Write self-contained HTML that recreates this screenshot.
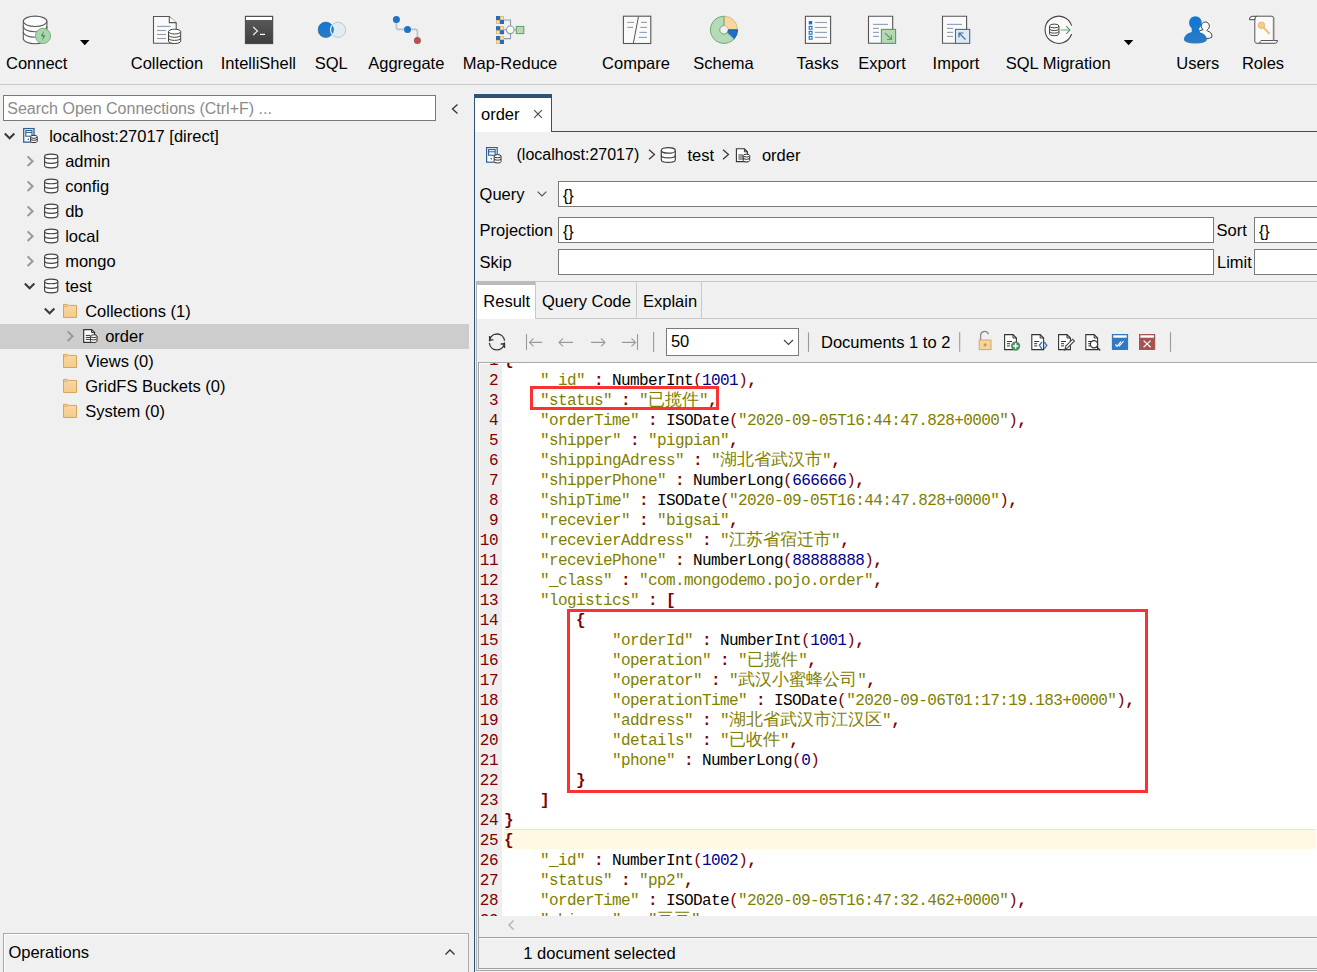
<!DOCTYPE html>
<html><head><meta charset="utf-8"><title>Studio 3T</title>
<style>
html,body{margin:0;padding:0;}
body{width:1317px;height:972px;overflow:hidden;position:relative;background:#f0f0f0;font-family:"Liberation Sans",sans-serif;}
.t{position:absolute;white-space:pre;}
.s{font-family:"Liberation Sans",sans-serif;}
.m{font-family:"Liberation Mono",monospace;}
.r{position:absolute;box-sizing:border-box;}
svg.r{overflow:visible;}
.k{color:#808000}
.p{color:#800000}
.n{color:#000090}
.c{font-size:16.5px;letter-spacing:0}
</style></head><body>

<div class="r" style="left:0px;top:84px;width:1317px;height:1px;background:#cacaca"></div>
<div class="t s" style="left:-63.30px;width:200px;text-align:center;top:53.08px;font-size:16.5px;line-height:20px;color:#000;">Connect</div>
<div class="t s" style="left:67.00px;width:200px;text-align:center;top:53.08px;font-size:16.5px;line-height:20px;color:#000;">Collection</div>
<div class="t s" style="left:158.40px;width:200px;text-align:center;top:53.08px;font-size:16.5px;line-height:20px;color:#000;">IntelliShell</div>
<div class="t s" style="left:231.20px;width:200px;text-align:center;top:53.08px;font-size:16.5px;line-height:20px;color:#000;">SQL</div>
<div class="t s" style="left:306.30px;width:200px;text-align:center;top:53.08px;font-size:16.5px;line-height:20px;color:#000;">Aggregate</div>
<div class="t s" style="left:410.00px;width:200px;text-align:center;top:53.08px;font-size:16.5px;line-height:20px;color:#000;">Map-Reduce</div>
<div class="t s" style="left:536.00px;width:200px;text-align:center;top:53.08px;font-size:16.5px;line-height:20px;color:#000;">Compare</div>
<div class="t s" style="left:623.50px;width:200px;text-align:center;top:53.08px;font-size:16.5px;line-height:20px;color:#000;">Schema</div>
<div class="t s" style="left:717.70px;width:200px;text-align:center;top:53.08px;font-size:16.5px;line-height:20px;color:#000;">Tasks</div>
<div class="t s" style="left:782.00px;width:200px;text-align:center;top:53.08px;font-size:16.5px;line-height:20px;color:#000;">Export</div>
<div class="t s" style="left:856.00px;width:200px;text-align:center;top:53.08px;font-size:16.5px;line-height:20px;color:#000;">Import</div>
<div class="t s" style="left:958.20px;width:200px;text-align:center;top:53.08px;font-size:16.5px;line-height:20px;color:#000;">SQL Migration</div>
<div class="t s" style="left:1097.80px;width:200px;text-align:center;top:53.08px;font-size:16.5px;line-height:20px;color:#000;">Users</div>
<div class="t s" style="left:1163.00px;width:200px;text-align:center;top:53.08px;font-size:16.5px;line-height:20px;color:#000;">Roles</div>
<svg class="r" style="left:0;top:0" width="1317" height="84" viewBox="0 0 1317 84"><g fill="#fdfdfd" stroke="#5a5a5a" stroke-width="1.1"><path d="M23.3 21.3 V38.5 A11.8 5.2 0 0 0 46.9 38.5 V21.3"/><ellipse cx="35.1" cy="21.3" rx="11.8" ry="5.2"/><path d="M23.3 26.5 A11.8 5.2 0 0 0 46.9 26.5" fill="none"/><path d="M23.3 32 A11.8 5.2 0 0 0 46.9 32" fill="none"/></g><circle cx="43" cy="35.9" r="7.6" fill="#a9d6ad" stroke="#78b482" stroke-width="1"/><path d="M44 30.5 L40.8 36.3 H43.2 L42 41.3 L45.3 35.3 H42.9 Z" fill="#3f8a4f"/><path d="M80 40 H89.5 L84.75 45.2 Z" fill="#000"/><path d="M1123.8 40 H1133.3 L1128.55 45.2 Z" fill="#000"/><path d="M153.5 16.5 H169.3 L176.2 23 V43.3 H153.5 Z" fill="#fafafa" stroke="#555" stroke-width="1.1"/><path d="M169.3 16.5 V22.6 H176.2" fill="#fff" stroke="#555" stroke-width="1.1"/><g stroke="#8da0b2" stroke-width="1.1"><path d="M157 26.4 H170.8"/><path d="M157 30.5 H166"/><path d="M157 34.5 H166"/><path d="M157 38.5 H166"/></g><g fill="#fff" stroke="#444" stroke-width="1"><path d="M168.5 31.6 V41.2 A6.1 2.3 0 0 0 180.7 41.2 V31.6"/><ellipse cx="174.6" cy="31.6" rx="6.1" ry="2.4"/><path d="M168.5 35 A6.1 2.3 0 0 0 180.7 35" fill="none"/><path d="M168.5 38.1 A6.1 2.3 0 0 0 180.7 38.1" fill="none"/></g><defs><linearGradient id="gsh" x1="0" y1="0" x2="0" y2="1"><stop offset="0" stop-color="#5c5c5c"/><stop offset="1" stop-color="#3e3e3e"/></linearGradient><linearGradient id="gblue" x1="0" y1="0" x2="0" y2="1"><stop offset="0" stop-color="#0b78d8"/><stop offset="1" stop-color="#2f7ac0"/></linearGradient></defs><rect x="245.3" y="16.2" width="27.5" height="27.5" fill="url(#gsh)" stroke="#3a3a3a" stroke-width="0.8"/><rect x="246" y="17" width="26" height="3" fill="#fff"/><path d="M253.2 27 L257.5 31 L253.2 35" fill="none" stroke="#f0f0f0" stroke-width="1.2"/><path d="M260 34.4 H265" stroke="#fff" stroke-width="1.2"/><circle cx="338.1" cy="29.8" r="7.6" fill="#e2ecf3" stroke="#b9c8d3" stroke-width="1"/><circle cx="325.8" cy="29.8" r="7.7" fill="url(#gblue)" stroke="#2864a0" stroke-width="0.6"/><path d="M332.8 24.4 A7.6 7.6 0 0 0 332.8 35.2" fill="none" stroke="#e2ecf3" stroke-width="1.3"/><path d="M396.4 19.4 V27.4 Q396.4 29.4 398.4 29.4 H415.4 Q417.4 29.4 417.4 31.4 V40.4" fill="none" stroke="#b5c2cc" stroke-width="1.6"/><circle cx="396.4" cy="19.4" r="3.5" fill="#1f72c6"/><circle cx="407.5" cy="29.4" r="3.5" fill="#1f72c6"/><circle cx="417.4" cy="40.4" r="3.5" fill="#b05252"/><path d="M504 20 H510.5 V38.6 H504 M504 29.8 H516" fill="none" stroke="#8f9ba5" stroke-width="1.1"/><rect x="496" y="16" width="8" height="8" fill="#e8b86a"/><rect x="496" y="16" width="4" height="4" fill="#1f6fc0"/><rect x="500" y="20" width="4" height="4" fill="#1f6fc0"/><rect x="500.9" y="16.9" width="2.2" height="2.2" fill="#fbe3b5"/><rect x="496.9" y="20.9" width="2.2" height="2.2" fill="#fbe3b5"/><rect x="496" y="26.2" width="8" height="8" fill="#e8b86a"/><rect x="496" y="26.2" width="4" height="4" fill="#1f6fc0"/><rect x="500" y="30.2" width="4" height="4" fill="#1f6fc0"/><rect x="500.9" y="27.099999999999998" width="2.2" height="2.2" fill="#fbe3b5"/><rect x="496.9" y="31.1" width="2.2" height="2.2" fill="#fbe3b5"/><rect x="496" y="36" width="8" height="8" fill="#e8b86a"/><rect x="496" y="36" width="4" height="4" fill="#1f6fc0"/><rect x="500" y="40" width="4" height="4" fill="#1f6fc0"/><rect x="500.9" y="36.9" width="2.2" height="2.2" fill="#fbe3b5"/><rect x="496.9" y="40.9" width="2.2" height="2.2" fill="#fbe3b5"/><circle cx="510.3" cy="29.8" r="3.8" fill="#fafafa" stroke="#8f9ba5" stroke-width="1.1"/><rect x="516.3" y="26.4" width="7.5" height="7.2" fill="#b5dbb5" stroke="#5f9f6b" stroke-width="1"/><rect x="623.4" y="16.2" width="27.4" height="27.3" fill="#fafafa" stroke="#555" stroke-width="1.1"/><path d="M638.5 16.5 L633.3 43.3" stroke="#555" stroke-width="1"/><g stroke="#8da0b2" stroke-width="1.1"><path d="M627.3 22.4 H634"/><path d="M627.3 27.4 H633"/><path d="M641 22.4 H647"/><path d="M640.3 27.4 H647"/><path d="M639.4 32.4 H647"/><path d="M638.6 37.4 H647"/></g><path d="M724.00 16.20 A13.6 13.6 0 0 1 737.60 29.80 L728.30 29.80 A4.3 4.3 0 0 0 724.00 25.50 Z" fill="#f8d8a0" stroke="#d9b98a" stroke-width="1"/><path d="M737.60 29.80 A13.6 13.6 0 0 1 734.11 38.90 L727.20 32.68 A4.3 4.3 0 0 0 728.30 29.80 Z" fill="#1f6fc4" stroke="#1f5fa4" stroke-width="1"/><path d="M734.11 38.90 A13.6 13.6 0 1 1 724.00 16.20 L724.00 25.50 A4.3 4.3 0 1 0 727.20 32.68 Z" fill="#b4dbb6" stroke="#6aa878" stroke-width="1"/><rect x="805.4" y="16.3" width="25.2" height="27.1" fill="#fafafa" stroke="#555" stroke-width="1.1"/><rect x="808.8" y="21" width="3.4" height="3.4" fill="#1f6fc0"/><rect x="809.2" y="26.4" width="2.8" height="2.8" fill="#fff" stroke="#1f6fc0" stroke-width="1.1"/><rect x="809.2" y="31.4" width="2.8" height="2.8" fill="#fff" stroke="#1f6fc0" stroke-width="1.1"/><rect x="809.2" y="36.4" width="2.8" height="2.8" fill="#fff" stroke="#1f6fc0" stroke-width="1.1"/><g stroke="#8da0b2" stroke-width="1.1"><path d="M815 22.5 H827"/><path d="M815 27.5 H827"/><path d="M815 32.4 H827"/><path d="M815 37.4 H827"/></g><path d="M868.5 16.3 H892.7 V43.3 H868.5 Z" fill="#fafafa" stroke="#555" stroke-width="1.1"/><g stroke="#8da0b2" stroke-width="1.1"><path d="M873 24.4 H888"/><path d="M873 28.4 H879"/><path d="M873 32.4 H879"/><path d="M873 36.4 H879"/></g><rect x="881.4" y="29.4" width="14.2" height="14" fill="#b3d9b3" stroke="#5e9c68" stroke-width="1.1"/><path d="M885 33 L891.5 39.5 M891.5 35 V39.5 H887" fill="none" stroke="#5e9c68" stroke-width="1.1"/><path d="M942.5 16.3 H966.6 V43.3 H942.5 Z" fill="#fafafa" stroke="#555" stroke-width="1.1"/><g stroke="#8da0b2" stroke-width="1.1"><path d="M947 24.4 H962"/><path d="M947 28.4 H953"/><path d="M947 32.4 H953"/><path d="M947 36.4 H953"/></g><rect x="955.5" y="29.4" width="14.2" height="14" fill="#dfe9f2" stroke="#3f6f9f" stroke-width="1.1"/><path d="M965.5 39.5 L959 33 M959 37.5 V33 H963.5" fill="none" stroke="#3f6f9f" stroke-width="1.2"/><path d="M1071.6 25.6 A13.6 13.6 0 1 0 1071.6 34" fill="#fafafa" stroke="#444" stroke-width="1.1"/><g fill="#fff" stroke="#444" stroke-width="1"><path d="M1049.5 26 V33.8 A4.7 1.9 0 0 0 1058.9 33.8 V26"/><ellipse cx="1054.2" cy="26" rx="4.7" ry="1.9"/><path d="M1049.5 28.7 A4.7 1.9 0 0 0 1058.9 28.7" fill="none"/><path d="M1049.5 31.3 A4.7 1.9 0 0 0 1058.9 31.3" fill="none"/></g><path d="M1060.5 30 H1069.5" stroke="#9cc6a4" stroke-width="1.6"/><path d="M1066.3 26.2 L1070 30 L1066.3 33.8" fill="none" stroke="#4f9a63" stroke-width="1.1"/><path d="M1203.2 29.6 A4.1 4.1 0 1 1 1207.4 29.6 Q1206.6 30.6 1207.6 31.2 Q1211.8 32.3 1211.8 35.6 V37.3 Q1210.4 38.6 1205 38.6 H1199 V31 Z" fill="#fafafa" stroke="#444" stroke-width="1"/><path d="M1195.4 16.2 a6.3 6.3 0 0 1 6.3 6.3 c0 2.7 -1.3 4.6 -2.6 5.8 v3.7 q7.7 2.2 7.9 7.8 q-1 3.7 -11.6 3.7 q-10.6 0 -11.6 -3.7 q0.2 -5.6 7.9 -7.8 v-3.7 c-1.3 -1.2 -2.6 -3.1 -2.6 -5.8 a6.3 6.3 0 0 1 6.3 -6.3 z" fill="url(#gblue)"/><path d="M1254.8 17.5 Q1255 16.2 1256.5 16.2 H1272 Q1273.5 16.4 1273.6 18 V40.7" fill="#fafafa" stroke="#555" stroke-width="1"/><rect x="1254.8" y="18" width="18.8" height="24" fill="#fafafa"/><path d="M1254.8 17.5 V41.5 Q1255 43.3 1257 43.3 H1275.5 Q1277.3 43 1277.6 40.5 H1261 Q1260 41 1259.8 43.3" fill="none" stroke="#555" stroke-width="1"/><path d="M1273.6 17.5 V40.5" stroke="#888" stroke-width="1.6"/><path d="M1249.4 19.7 Q1249.5 16.4 1252.2 16.3 H1256.6 Q1254.6 17 1254.8 19.7 Z" fill="#fff" stroke="#444" stroke-width="1"/><circle cx="1261.4" cy="25.3" r="3.3" fill="#f6cf8e" stroke="#e2b068" stroke-width="0.8"/><path d="M1263.2 27.3 L1269 33.2" stroke="#f0c27c" stroke-width="2.2" stroke-linecap="round"/></svg>
<div class="r" style="left:3px;top:95px;width:433px;height:26px;background:#fff;border:1px solid #7a7a7a"></div>
<div class="t s" style="left:7.30px;top:99.46px;font-size:16px;line-height:20px;color:#8b8b8b;">Search Open Connections (Ctrl+F) ...</div>
<svg class="r" style="left:449px;top:102px;" width="12" height="14" viewBox="0 0 12 14"><path d="M8.5 2.5 L3.5 7 L8.5 11.5" fill="none" stroke="#333" stroke-width="1.3"/></svg>
<div class="r" style="left:0px;top:324px;width:469px;height:25px;background:#cdcdcd"></div>
<svg class="r" style="left:4px;top:132px;" width="12" height="9" viewBox="0 0 12 9"><path d="M0.8 1.5 L5.6 6.3 L10.4 1.5" fill="none" stroke="#3a3a3a" stroke-width="2"/></svg>
<svg class="r" style="left:23px;top:124px;" width="16" height="20" viewBox="0 0 16 20"><rect x="0.7" y="4.6" width="10.3" height="13.5" fill="#fff" stroke="#2e6096" stroke-width="1.3"/><rect x="2.8" y="6.6" width="6.2" height="5.6" fill="#fff" stroke="#2e6096" stroke-width="1.1"/><path d="M3 8.6 H9" stroke="#2e6096" stroke-width="1"/><path d="M4.3 15.2 L6 14.2 V16.2 Z" fill="#2e6096"/><g fill="#fff" stroke="#333" stroke-width="1"><path d="M7.6 12.8 V17.3 A3.3 1.3 0 0 0 14.2 17.3 V12.8"/><ellipse cx="10.9" cy="12.8" rx="3.3" ry="1.5"/><path d="M7.6 15 A3.3 1.3 0 0 0 14.2 15" fill="none"/></g></svg>
<div class="t s" style="left:49.20px;top:126.28px;font-size:16.5px;line-height:20px;color:#000;">localhost:27017 [direct]</div>
<svg class="r" style="left:26px;top:155px;" width="9" height="13" viewBox="0 0 9 13"><path d="M1.6 1.4 L6.6 6.2 L1.6 11" fill="none" stroke="#999" stroke-width="2"/></svg>
<svg class="r" style="left:43.6px;top:149px;" width="15" height="20" viewBox="0 0 15 20"><g fill="#fff" stroke="#444" stroke-width="1.15"><path d="M0.6 7.4 V16.6 A6.6 2.3 0 0 0 13.8 16.6 V7.4"/><ellipse cx="7.2" cy="7.4" rx="6.6" ry="2.3"/><path d="M0.6 12 A6.6 2.3 0 0 0 13.8 12" fill="none"/></g></svg>
<div class="t s" style="left:65.20px;top:151.28px;font-size:16.5px;line-height:20px;color:#000;">admin</div>
<svg class="r" style="left:26px;top:180px;" width="9" height="13" viewBox="0 0 9 13"><path d="M1.6 1.4 L6.6 6.2 L1.6 11" fill="none" stroke="#999" stroke-width="2"/></svg>
<svg class="r" style="left:43.6px;top:174px;" width="15" height="20" viewBox="0 0 15 20"><g fill="#fff" stroke="#444" stroke-width="1.15"><path d="M0.6 7.4 V16.6 A6.6 2.3 0 0 0 13.8 16.6 V7.4"/><ellipse cx="7.2" cy="7.4" rx="6.6" ry="2.3"/><path d="M0.6 12 A6.6 2.3 0 0 0 13.8 12" fill="none"/></g></svg>
<div class="t s" style="left:65.20px;top:176.28px;font-size:16.5px;line-height:20px;color:#000;">config</div>
<svg class="r" style="left:26px;top:205px;" width="9" height="13" viewBox="0 0 9 13"><path d="M1.6 1.4 L6.6 6.2 L1.6 11" fill="none" stroke="#999" stroke-width="2"/></svg>
<svg class="r" style="left:43.6px;top:199px;" width="15" height="20" viewBox="0 0 15 20"><g fill="#fff" stroke="#444" stroke-width="1.15"><path d="M0.6 7.4 V16.6 A6.6 2.3 0 0 0 13.8 16.6 V7.4"/><ellipse cx="7.2" cy="7.4" rx="6.6" ry="2.3"/><path d="M0.6 12 A6.6 2.3 0 0 0 13.8 12" fill="none"/></g></svg>
<div class="t s" style="left:65.20px;top:201.28px;font-size:16.5px;line-height:20px;color:#000;">db</div>
<svg class="r" style="left:26px;top:230px;" width="9" height="13" viewBox="0 0 9 13"><path d="M1.6 1.4 L6.6 6.2 L1.6 11" fill="none" stroke="#999" stroke-width="2"/></svg>
<svg class="r" style="left:43.6px;top:224px;" width="15" height="20" viewBox="0 0 15 20"><g fill="#fff" stroke="#444" stroke-width="1.15"><path d="M0.6 7.4 V16.6 A6.6 2.3 0 0 0 13.8 16.6 V7.4"/><ellipse cx="7.2" cy="7.4" rx="6.6" ry="2.3"/><path d="M0.6 12 A6.6 2.3 0 0 0 13.8 12" fill="none"/></g></svg>
<div class="t s" style="left:65.20px;top:226.28px;font-size:16.5px;line-height:20px;color:#000;">local</div>
<svg class="r" style="left:26px;top:255px;" width="9" height="13" viewBox="0 0 9 13"><path d="M1.6 1.4 L6.6 6.2 L1.6 11" fill="none" stroke="#999" stroke-width="2"/></svg>
<svg class="r" style="left:43.6px;top:249px;" width="15" height="20" viewBox="0 0 15 20"><g fill="#fff" stroke="#444" stroke-width="1.15"><path d="M0.6 7.4 V16.6 A6.6 2.3 0 0 0 13.8 16.6 V7.4"/><ellipse cx="7.2" cy="7.4" rx="6.6" ry="2.3"/><path d="M0.6 12 A6.6 2.3 0 0 0 13.8 12" fill="none"/></g></svg>
<div class="t s" style="left:65.20px;top:251.28px;font-size:16.5px;line-height:20px;color:#000;">mongo</div>
<svg class="r" style="left:24px;top:282px;" width="12" height="9" viewBox="0 0 12 9"><path d="M0.8 1.5 L5.6 6.3 L10.4 1.5" fill="none" stroke="#3a3a3a" stroke-width="2"/></svg>
<svg class="r" style="left:43.6px;top:274px;" width="15" height="20" viewBox="0 0 15 20"><g fill="#fff" stroke="#444" stroke-width="1.15"><path d="M0.6 7.4 V16.6 A6.6 2.3 0 0 0 13.8 16.6 V7.4"/><ellipse cx="7.2" cy="7.4" rx="6.6" ry="2.3"/><path d="M0.6 12 A6.6 2.3 0 0 0 13.8 12" fill="none"/></g></svg>
<div class="t s" style="left:65.20px;top:276.28px;font-size:16.5px;line-height:20px;color:#000;">test</div>
<svg class="r" style="left:44px;top:307px;" width="12" height="9" viewBox="0 0 12 9"><path d="M0.8 1.5 L5.6 6.3 L10.4 1.5" fill="none" stroke="#3a3a3a" stroke-width="2"/></svg>
<svg class="r" style="left:63px;top:299px;" width="15" height="20" viewBox="0 0 15 20"><defs><linearGradient id="gf" x1="0" y1="0" x2="0" y2="1"><stop offset="0" stop-color="#fad9a2"/><stop offset="1" stop-color="#f3cb8c"/></linearGradient></defs><path d="M0.5 5.4 H4.6 L5.4 6.4 H13.5 V18.5 H0.5 Z" fill="url(#gf)" stroke="#d8a55c" stroke-width="1"/><path d="M1 7.3 H4.6" stroke="#e0b070" stroke-width="1.2"/></svg>
<div class="t s" style="left:85.20px;top:301.28px;font-size:16.5px;line-height:20px;color:#000;">Collections (1)</div>
<svg class="r" style="left:66px;top:330px;" width="9" height="13" viewBox="0 0 9 13"><path d="M1.6 1.4 L6.6 6.2 L1.6 11" fill="none" stroke="#999" stroke-width="2"/></svg>
<svg class="r" style="left:83px;top:324px;" width="16" height="20" viewBox="0 0 16 20"><path d="M0.7 5.6 H8.6 L11.6 8.6 V18.4 H0.7 Z" fill="#fff" stroke="#333" stroke-width="1.2"/><path d="M8.6 5.6 V8.6 H11.6" fill="none" stroke="#333" stroke-width="1"/><g stroke="#333" stroke-width="1"><path d="M2.8 11.4 H7.5"/><path d="M2.8 13.4 H7.5"/><path d="M2.8 15.4 H7.5"/></g><g fill="#fff" stroke="#333" stroke-width="1"><path d="M7.6 12.2 V17.2 A3.2 1.3 0 0 0 14 17.2 V12.2"/><ellipse cx="10.8" cy="12.2" rx="3.2" ry="1.4"/><path d="M7.6 14.6 A3.2 1.3 0 0 0 14 14.6" fill="none"/></g></svg>
<div class="t s" style="left:105.20px;top:326.28px;font-size:16.5px;line-height:20px;color:#000;">order</div>
<svg class="r" style="left:63px;top:349px;" width="15" height="20" viewBox="0 0 15 20"><defs><linearGradient id="gf" x1="0" y1="0" x2="0" y2="1"><stop offset="0" stop-color="#fad9a2"/><stop offset="1" stop-color="#f3cb8c"/></linearGradient></defs><path d="M0.5 5.4 H4.6 L5.4 6.4 H13.5 V18.5 H0.5 Z" fill="url(#gf)" stroke="#d8a55c" stroke-width="1"/><path d="M1 7.3 H4.6" stroke="#e0b070" stroke-width="1.2"/></svg>
<div class="t s" style="left:85.20px;top:351.28px;font-size:16.5px;line-height:20px;color:#000;">Views (0)</div>
<svg class="r" style="left:63px;top:374px;" width="15" height="20" viewBox="0 0 15 20"><defs><linearGradient id="gf" x1="0" y1="0" x2="0" y2="1"><stop offset="0" stop-color="#fad9a2"/><stop offset="1" stop-color="#f3cb8c"/></linearGradient></defs><path d="M0.5 5.4 H4.6 L5.4 6.4 H13.5 V18.5 H0.5 Z" fill="url(#gf)" stroke="#d8a55c" stroke-width="1"/><path d="M1 7.3 H4.6" stroke="#e0b070" stroke-width="1.2"/></svg>
<div class="t s" style="left:85.20px;top:376.28px;font-size:16.5px;line-height:20px;color:#000;">GridFS Buckets (0)</div>
<svg class="r" style="left:63px;top:399px;" width="15" height="20" viewBox="0 0 15 20"><defs><linearGradient id="gf" x1="0" y1="0" x2="0" y2="1"><stop offset="0" stop-color="#fad9a2"/><stop offset="1" stop-color="#f3cb8c"/></linearGradient></defs><path d="M0.5 5.4 H4.6 L5.4 6.4 H13.5 V18.5 H0.5 Z" fill="url(#gf)" stroke="#d8a55c" stroke-width="1"/><path d="M1 7.3 H4.6" stroke="#e0b070" stroke-width="1.2"/></svg>
<div class="t s" style="left:85.20px;top:401.28px;font-size:16.5px;line-height:20px;color:#000;">System (0)</div>
<div class="r" style="left:3px;top:933px;width:466px;height:39px;border:1px solid #a9a9a9;border-bottom:none;box-shadow:inset 1px 1px 0 #fff"></div>
<div class="t s" style="left:8.40px;top:942.28px;font-size:16.5px;line-height:20px;color:#000;">Operations</div>
<svg class="r" style="left:444px;top:947px;" width="12" height="10" viewBox="0 0 12 10"><path d="M1.5 7.5 L6 3 L10.5 7.5" fill="none" stroke="#333" stroke-width="1.3"/></svg>
<div class="r" style="left:474px;top:94px;width:78px;height:38px;background:#fff;border-left:1px solid #2e5276;border-right:1px solid #2e5276;border-top:4px solid #2e5276"></div>
<div class="r" style="left:551px;top:131px;width:766px;height:1px;background:#2e5276"></div>
<div class="r" style="left:474px;top:132px;width:1px;height:840px;background:#2e5276"></div>
<div class="t s" style="left:481.00px;top:104.08px;font-size:16.5px;line-height:20px;color:#000;">order</div>
<svg class="r" style="left:533px;top:109px;" width="10" height="10" viewBox="0 0 10 10"><path d="M1.2 1.2 L8.8 8.8 M8.8 1.2 L1.2 8.8" stroke="#444" stroke-width="1.1"/></svg>
<svg class="r" style="left:485px;top:146px;" width="18" height="18" viewBox="0 0 18 18"><rect x="1.6" y="1.6" width="10.6" height="14.6" fill="#fff" stroke="#2e6096" stroke-width="1.2"/><rect x="3.6" y="3.6" width="6.6" height="5.6" fill="#fff" stroke="#2e6096" stroke-width="1.1"/><path d="M3.8 5.8 H10" stroke="#2e6096" stroke-width="1"/><path d="M5 12.8 L6.8 11.8 V13.8 Z" fill="#2e6096"/><g fill="#fff" stroke="#333" stroke-width="1"><path d="M9.2 10.2 V15.6 A3.4 1.4 0 0 0 16 15.6 V10.2"/><ellipse cx="12.6" cy="10.2" rx="3.4" ry="1.6"/><path d="M9.2 12.8 A3.4 1.4 0 0 0 16 12.8" fill="none"/></g></svg>
<div class="t s" style="left:516.50px;top:144.76px;font-size:16px;line-height:20px;color:#000;">(localhost:27017)</div>
<svg class="r" style="left:647px;top:148px;" width="10" height="13" viewBox="0 0 10 13"><path d="M2 1.8 L7.5 6.5 L2 11.2" fill="none" stroke="#333" stroke-width="1.2"/></svg>
<svg class="r" style="left:660px;top:146px;" width="17" height="18" viewBox="0 0 17 18"><g fill="#fff" stroke="#444" stroke-width="1.2"><path d="M1.3 4.4 V13.8 A7 2.6 0 0 0 15.3 13.8 V4.4"/><ellipse cx="8.3" cy="4.4" rx="7" ry="2.8"/><path d="M1.3 9.2 A7 2.6 0 0 0 15.3 9.2" fill="none"/></g></svg>
<div class="t s" style="left:687.40px;top:144.78px;font-size:16.5px;line-height:20px;color:#000;">test</div>
<svg class="r" style="left:721px;top:148px;" width="10" height="13" viewBox="0 0 10 13"><path d="M2 1.8 L7.5 6.5 L2 11.2" fill="none" stroke="#333" stroke-width="1.2"/></svg>
<svg class="r" style="left:735px;top:147px;" width="17" height="17" viewBox="0 0 17 17"><path d="M1.4 1.8 H9.4 L12.4 4.8 V14.6 H1.4 Z" fill="#fff" stroke="#333" stroke-width="1.1"/><path d="M9.4 1.8 V4.8 H12.4" fill="none" stroke="#333" stroke-width="1"/><g stroke="#333" stroke-width="1"><path d="M3.4 8 H8"/><path d="M3.4 10 H8"/><path d="M3.4 12 H8"/></g><g fill="#fff" stroke="#333" stroke-width="1"><path d="M8.3 8.6 V13.6 A3.2 1.3 0 0 0 14.7 13.6 V8.6"/><ellipse cx="11.5" cy="8.6" rx="3.2" ry="1.4"/><path d="M8.3 11 A3.2 1.3 0 0 0 14.7 11" fill="none"/></g></svg>
<div class="t s" style="left:761.90px;top:144.78px;font-size:16.5px;line-height:20px;color:#000;">order</div>
<div class="t s" style="left:479.60px;top:183.98px;font-size:16.5px;line-height:20px;color:#000;">Query</div>
<svg class="r" style="left:536px;top:189px;" width="12" height="9" viewBox="0 0 12 9"><path d="M1.6 2.6 L6 7 L10.4 2.6" fill="none" stroke="#555" stroke-width="1.2"/></svg>
<div class="r" style="left:558px;top:181px;width:760px;height:26px;background:#fff;border:1px solid #7a7a7a;border-right:none"></div>
<div class="t s" style="left:563.00px;top:185.96px;font-size:16px;line-height:20px;color:#000;">{}</div>
<div class="t s" style="left:479.60px;top:220.18px;font-size:16.5px;line-height:20px;color:#000;">Projection</div>
<div class="r" style="left:558px;top:217px;width:656px;height:26px;background:#fff;border:1px solid #7a7a7a"></div>
<div class="t s" style="left:563.00px;top:221.96px;font-size:16px;line-height:20px;color:#000;">{}</div>
<div class="t s" style="left:1216.50px;top:220.18px;font-size:16.5px;line-height:20px;color:#000;">Sort</div>
<div class="r" style="left:1254px;top:217px;width:64px;height:26px;background:#fff;border:1px solid #7a7a7a;border-right:none"></div>
<div class="t s" style="left:1259.00px;top:221.96px;font-size:16px;line-height:20px;color:#000;">{}</div>
<div class="t s" style="left:479.60px;top:252.08px;font-size:16.5px;line-height:20px;color:#000;">Skip</div>
<div class="r" style="left:558px;top:249px;width:656px;height:26px;background:#fff;border:1px solid #7a7a7a"></div>
<div class="t s" style="left:1217.00px;top:252.18px;font-size:16.5px;line-height:20px;color:#000;">Limit</div>
<div class="r" style="left:1254px;top:249px;width:64px;height:26px;background:#fff;border:1px solid #7a7a7a;border-right:none"></div>
<div class="r" style="left:476px;top:281px;width:841px;height:1px;background:#c9c9c9"></div>
<div class="r" style="left:476px;top:318px;width:841px;height:1px;background:#c9c9c9"></div>
<div class="r" style="left:476px;top:281px;width:59px;height:4px;background:#bababa"></div>
<div class="r" style="left:477px;top:285px;width:58px;height:34px;background:#fff"></div>
<div class="r" style="left:535px;top:282px;width:1px;height:36px;background:#c9c9c9"></div>
<div class="r" style="left:636px;top:282px;width:1px;height:36px;background:#c9c9c9"></div>
<div class="r" style="left:701px;top:282px;width:1px;height:36px;background:#c9c9c9"></div>
<div class="t s" style="left:483.30px;top:290.78px;font-size:16.5px;line-height:20px;color:#000;">Result</div>
<div class="t s" style="left:542.00px;top:290.78px;font-size:16.5px;line-height:20px;color:#000;">Query Code</div>
<div class="t s" style="left:643.00px;top:290.78px;font-size:16.5px;line-height:20px;color:#000;">Explain</div>
<svg class="r" style="left:0;top:0" width="1317" height="972" viewBox="0 0 1317 972"><g fill="none" stroke="#383838" stroke-width="1.35"><path d="M489.7 339.6 A7.6 7.6 0 0 1 504.6 340.8"/><path d="M504.3 344.2 A7.6 7.6 0 0 1 489.4 343"/><path d="M489.6 336 V339.9 H493.4"/><path d="M504.5 347.9 V344 H500.7"/></g><path d="M489 339.5 L489 342 L491.4 340.2 Z M505 344.4 L505 342 L502.6 343.6 Z" fill="#383838"/><g fill="none" stroke="#9a9a9a" stroke-width="1.1"><path d="M526.5 334 V350"/><path d="M529.5 342.4 H542.2 M533.5 338.4 L529.5 342.4 L533.5 346.4"/><path d="M559 342.4 H573 M563 338.4 L559 342.4 L563 346.4"/><path d="M591 342.4 H605 M601 338.4 L605 342.4 L601 346.4"/><path d="M622 342.4 H635.5 M631.5 338.4 L635.5 342.4 L631.5 346.4"/><path d="M637.5 334 V350"/><path d="M653.6 332 V352"/><path d="M808.5 332.3 V351.8"/><path d="M959.7 332.3 V351.8"/><path d="M1170.5 332.3 V351.8"/></g></svg>
<div class="r" style="left:666px;top:328px;width:133px;height:28px;background:#fff;border:1px solid #7a7a7a"></div>
<svg class="r" style="left:783px;top:339px;" width="11" height="7" viewBox="0 0 11 7"><path d="M1 1 L5.5 5.5 L10 1" fill="none" stroke="#444" stroke-width="1.2"/></svg>
<div class="t s" style="left:670.90px;top:331.28px;font-size:16.5px;line-height:20px;color:#000;">50</div>
<div class="t s" style="left:821.00px;top:331.78px;font-size:16.5px;line-height:20px;color:#000;">Documents 1 to 2</div>
<svg class="r" style="left:0;top:0" width="1317" height="972" viewBox="0 0 1317 972"><path d="M980.6 340.2 V335 A4 4 0 0 1 988.4 334.3" fill="none" stroke="#8a8a8a" stroke-width="1.3"/><rect x="979.2" y="340" width="11.8" height="9.6" fill="#f6d49c" stroke="#d3a868" stroke-width="1"/><circle cx="985.1" cy="344.8" r="1.6" fill="#c89a5a"/><path d="M1004.6 334.6 H1013 L1016.4 338 V349.6 H1004.6 Z" fill="#fff" stroke="#333" stroke-width="1.1"/><path d="M1013 334.6 V338 H1016.4" fill="none" stroke="#333" stroke-width="1"/><g stroke="#333" stroke-width="1"><path d="M1007 341.5 H1012"/><path d="M1007 343.7 H1010"/><path d="M1007 345.9 H1010"/></g><circle cx="1015.6" cy="346" r="4.6" fill="#4a9060"/><path d="M1015.6 343.3 V348.7 M1012.9 346 H1018.3" stroke="#fff" stroke-width="1.5"/><path d="M1031.8 334.6 H1040.2 L1043.6000000000001 338 V349.6 H1031.8 Z" fill="#fff" stroke="#333" stroke-width="1.1"/><path d="M1040.2 334.6 V338 H1043.6000000000001" fill="none" stroke="#333" stroke-width="1"/><g stroke="#333" stroke-width="1"><path d="M1034.2 341.5 H1039.2"/><path d="M1034.2 343.7 H1037.2"/><path d="M1034.2 345.9 H1037.2"/></g><path d="M1042 341.8 L1039.4 345.3 L1042 348.8 M1044.2 341.8 L1046.8 345.3 L1044.2 348.8" fill="none" stroke="#3a78b8" stroke-width="1.4"/><path d="M1058.6 334.6 H1067 L1070.4 338 V349.6 H1058.6 Z" fill="#fff" stroke="#333" stroke-width="1.1"/><path d="M1067 334.6 V338 H1070.4" fill="none" stroke="#333" stroke-width="1"/><g stroke="#333" stroke-width="1"><path d="M1061 341.5 H1066"/><path d="M1061 343.7 H1064"/><path d="M1061 345.9 H1064"/></g><path d="M1064.8 349.8 L1066 345.8 L1072.6 339.2 L1074.4 341 L1067.8 347.6 Z" fill="#fff" stroke="#444" stroke-width="1.1"/><path d="M1085.8 334.6 H1094.2 L1097.6000000000001 338 V349.6 H1085.8 Z" fill="#fff" stroke="#333" stroke-width="1.1"/><path d="M1094.2 334.6 V338 H1097.6000000000001" fill="none" stroke="#333" stroke-width="1"/><g stroke="#333" stroke-width="1"><path d="M1088.2 341.5 H1093.2"/><path d="M1088.2 343.7 H1091.2"/><path d="M1088.2 345.9 H1091.2"/></g><circle cx="1094" cy="344.3" r="3.6" fill="#fff" stroke="#333" stroke-width="1.2"/><path d="M1096.6 347 L1100.2 350.4" stroke="#333" stroke-width="1.5"/><rect x="1112.3" y="334.5" width="15.4" height="15" fill="#2e7ac6" stroke="#2a64a8" stroke-width="0.8"/><rect x="1113.2" y="335.3" width="13.6" height="2.4" fill="#fff"/><path d="M1115.2 344.4 L1117 346.4 L1121 341.6 M1118.8 346.4 L1123.6 341.2" fill="none" stroke="#fff" stroke-width="1.1"/><rect x="1139.4" y="334.5" width="15.4" height="15" fill="#aa5050" stroke="#994444" stroke-width="0.8"/><rect x="1140.3" y="335.3" width="13.6" height="2.4" fill="#fff"/><path d="M1143.6 340.6 L1150.6 347.2 M1150.6 340.6 L1143.6 347.2" stroke="#fff" stroke-width="1.2"/></svg>
<div class="r" style="left:478px;top:362px;width:839px;height:1px;background:#a9a9a9"></div>
<div class="r" style="left:478px;top:363px;width:839px;height:553px;overflow:hidden;background:#fff">
<div class="r" style="left:1px;top:1px;width:23px;height:552px;background:#eeeeee;border-left:1px solid #fff"></div>
<div class="r" style="left:26px;top:466px;width:812px;height:20px;background:#fff8e2;border-top:1px solid #e2e2ec"></div>
<div class="t m" style="left:0px;top:-12px;width:20px;text-align:right;font-size:16px;letter-spacing:-0.5px;line-height:20px;color:#800000">1</div>
<div class="t m" style="left:26px;top:-12px;font-size:16px;letter-spacing:-0.6px;line-height:20px;color:#000"><b class="p">{</b></div>
<div class="t m" style="left:0px;top:8px;width:20px;text-align:right;font-size:16px;letter-spacing:-0.5px;line-height:20px;color:#800000">2</div>
<div class="t m" style="left:26px;top:8px;font-size:16px;letter-spacing:-0.6px;line-height:20px;color:#000">    <span class="k">&quot;_id&quot;</span> <b class="p">:</b> NumberInt<span class="p">(</span><span class="n">1001</span><span class="p">)</span><b class="p">,</b></div>
<div class="t m" style="left:0px;top:28px;width:20px;text-align:right;font-size:16px;letter-spacing:-0.5px;line-height:20px;color:#800000">3</div>
<div class="t m" style="left:26px;top:28px;font-size:16px;letter-spacing:-0.6px;line-height:20px;color:#000">    <span class="k">&quot;status&quot;</span> <b class="p">:</b> <span class="k">&quot;<span class="c">已揽件</span>&quot;</span><b class="p">,</b></div>
<div class="t m" style="left:0px;top:48px;width:20px;text-align:right;font-size:16px;letter-spacing:-0.5px;line-height:20px;color:#800000">4</div>
<div class="t m" style="left:26px;top:48px;font-size:16px;letter-spacing:-0.6px;line-height:20px;color:#000">    <span class="k">&quot;orderTime&quot;</span> <b class="p">:</b> ISODate<span class="p">(</span><span class="k">&quot;2020-09-05T16:44:47.828+0000&quot;</span><span class="p">)</span><b class="p">,</b></div>
<div class="t m" style="left:0px;top:68px;width:20px;text-align:right;font-size:16px;letter-spacing:-0.5px;line-height:20px;color:#800000">5</div>
<div class="t m" style="left:26px;top:68px;font-size:16px;letter-spacing:-0.6px;line-height:20px;color:#000">    <span class="k">&quot;shipper&quot;</span> <b class="p">:</b> <span class="k">&quot;pigpian&quot;</span><b class="p">,</b></div>
<div class="t m" style="left:0px;top:88px;width:20px;text-align:right;font-size:16px;letter-spacing:-0.5px;line-height:20px;color:#800000">6</div>
<div class="t m" style="left:26px;top:88px;font-size:16px;letter-spacing:-0.6px;line-height:20px;color:#000">    <span class="k">&quot;shippingAdress&quot;</span> <b class="p">:</b> <span class="k">&quot;<span class="c">湖北省武汉市</span>&quot;</span><b class="p">,</b></div>
<div class="t m" style="left:0px;top:108px;width:20px;text-align:right;font-size:16px;letter-spacing:-0.5px;line-height:20px;color:#800000">7</div>
<div class="t m" style="left:26px;top:108px;font-size:16px;letter-spacing:-0.6px;line-height:20px;color:#000">    <span class="k">&quot;shipperPhone&quot;</span> <b class="p">:</b> NumberLong<span class="p">(</span><span class="n">666666</span><span class="p">)</span><b class="p">,</b></div>
<div class="t m" style="left:0px;top:128px;width:20px;text-align:right;font-size:16px;letter-spacing:-0.5px;line-height:20px;color:#800000">8</div>
<div class="t m" style="left:26px;top:128px;font-size:16px;letter-spacing:-0.6px;line-height:20px;color:#000">    <span class="k">&quot;shipTime&quot;</span> <b class="p">:</b> ISODate<span class="p">(</span><span class="k">&quot;2020-09-05T16:44:47.828+0000&quot;</span><span class="p">)</span><b class="p">,</b></div>
<div class="t m" style="left:0px;top:148px;width:20px;text-align:right;font-size:16px;letter-spacing:-0.5px;line-height:20px;color:#800000">9</div>
<div class="t m" style="left:26px;top:148px;font-size:16px;letter-spacing:-0.6px;line-height:20px;color:#000">    <span class="k">&quot;recevier&quot;</span> <b class="p">:</b> <span class="k">&quot;bigsai&quot;</span><b class="p">,</b></div>
<div class="t m" style="left:0px;top:168px;width:20px;text-align:right;font-size:16px;letter-spacing:-0.5px;line-height:20px;color:#800000">10</div>
<div class="t m" style="left:26px;top:168px;font-size:16px;letter-spacing:-0.6px;line-height:20px;color:#000">    <span class="k">&quot;recevierAddress&quot;</span> <b class="p">:</b> <span class="k">&quot;<span class="c">江苏省宿迁市</span>&quot;</span><b class="p">,</b></div>
<div class="t m" style="left:0px;top:188px;width:20px;text-align:right;font-size:16px;letter-spacing:-0.5px;line-height:20px;color:#800000">11</div>
<div class="t m" style="left:26px;top:188px;font-size:16px;letter-spacing:-0.6px;line-height:20px;color:#000">    <span class="k">&quot;receviePhone&quot;</span> <b class="p">:</b> NumberLong<span class="p">(</span><span class="n">88888888</span><span class="p">)</span><b class="p">,</b></div>
<div class="t m" style="left:0px;top:208px;width:20px;text-align:right;font-size:16px;letter-spacing:-0.5px;line-height:20px;color:#800000">12</div>
<div class="t m" style="left:26px;top:208px;font-size:16px;letter-spacing:-0.6px;line-height:20px;color:#000">    <span class="k">&quot;_class&quot;</span> <b class="p">:</b> <span class="k">&quot;com.mongodemo.pojo.order&quot;</span><b class="p">,</b></div>
<div class="t m" style="left:0px;top:228px;width:20px;text-align:right;font-size:16px;letter-spacing:-0.5px;line-height:20px;color:#800000">13</div>
<div class="t m" style="left:26px;top:228px;font-size:16px;letter-spacing:-0.6px;line-height:20px;color:#000">    <span class="k">&quot;logistics&quot;</span> <b class="p">:</b> <b class="p">[</b></div>
<div class="t m" style="left:0px;top:248px;width:20px;text-align:right;font-size:16px;letter-spacing:-0.5px;line-height:20px;color:#800000">14</div>
<div class="t m" style="left:26px;top:248px;font-size:16px;letter-spacing:-0.6px;line-height:20px;color:#000">        <b class="p">{</b></div>
<div class="t m" style="left:0px;top:268px;width:20px;text-align:right;font-size:16px;letter-spacing:-0.5px;line-height:20px;color:#800000">15</div>
<div class="t m" style="left:26px;top:268px;font-size:16px;letter-spacing:-0.6px;line-height:20px;color:#000">            <span class="k">&quot;orderId&quot;</span> <b class="p">:</b> NumberInt<span class="p">(</span><span class="n">1001</span><span class="p">)</span><b class="p">,</b></div>
<div class="t m" style="left:0px;top:288px;width:20px;text-align:right;font-size:16px;letter-spacing:-0.5px;line-height:20px;color:#800000">16</div>
<div class="t m" style="left:26px;top:288px;font-size:16px;letter-spacing:-0.6px;line-height:20px;color:#000">            <span class="k">&quot;operation&quot;</span> <b class="p">:</b> <span class="k">&quot;<span class="c">已揽件</span>&quot;</span><b class="p">,</b></div>
<div class="t m" style="left:0px;top:308px;width:20px;text-align:right;font-size:16px;letter-spacing:-0.5px;line-height:20px;color:#800000">17</div>
<div class="t m" style="left:26px;top:308px;font-size:16px;letter-spacing:-0.6px;line-height:20px;color:#000">            <span class="k">&quot;operator&quot;</span> <b class="p">:</b> <span class="k">&quot;<span class="c">武汉小蜜蜂公司</span>&quot;</span><b class="p">,</b></div>
<div class="t m" style="left:0px;top:328px;width:20px;text-align:right;font-size:16px;letter-spacing:-0.5px;line-height:20px;color:#800000">18</div>
<div class="t m" style="left:26px;top:328px;font-size:16px;letter-spacing:-0.6px;line-height:20px;color:#000">            <span class="k">&quot;operationTime&quot;</span> <b class="p">:</b> ISODate<span class="p">(</span><span class="k">&quot;2020-09-06T01:17:19.183+0000&quot;</span><span class="p">)</span><b class="p">,</b></div>
<div class="t m" style="left:0px;top:348px;width:20px;text-align:right;font-size:16px;letter-spacing:-0.5px;line-height:20px;color:#800000">19</div>
<div class="t m" style="left:26px;top:348px;font-size:16px;letter-spacing:-0.6px;line-height:20px;color:#000">            <span class="k">&quot;address&quot;</span> <b class="p">:</b> <span class="k">&quot;<span class="c">湖北省武汉市江汉区</span>&quot;</span><b class="p">,</b></div>
<div class="t m" style="left:0px;top:368px;width:20px;text-align:right;font-size:16px;letter-spacing:-0.5px;line-height:20px;color:#800000">20</div>
<div class="t m" style="left:26px;top:368px;font-size:16px;letter-spacing:-0.6px;line-height:20px;color:#000">            <span class="k">&quot;details&quot;</span> <b class="p">:</b> <span class="k">&quot;<span class="c">已收件</span>&quot;</span><b class="p">,</b></div>
<div class="t m" style="left:0px;top:388px;width:20px;text-align:right;font-size:16px;letter-spacing:-0.5px;line-height:20px;color:#800000">21</div>
<div class="t m" style="left:26px;top:388px;font-size:16px;letter-spacing:-0.6px;line-height:20px;color:#000">            <span class="k">&quot;phone&quot;</span> <b class="p">:</b> NumberLong<span class="p">(</span><span class="n">0</span><span class="p">)</span></div>
<div class="t m" style="left:0px;top:408px;width:20px;text-align:right;font-size:16px;letter-spacing:-0.5px;line-height:20px;color:#800000">22</div>
<div class="t m" style="left:26px;top:408px;font-size:16px;letter-spacing:-0.6px;line-height:20px;color:#000">        <b class="p">}</b></div>
<div class="t m" style="left:0px;top:428px;width:20px;text-align:right;font-size:16px;letter-spacing:-0.5px;line-height:20px;color:#800000">23</div>
<div class="t m" style="left:26px;top:428px;font-size:16px;letter-spacing:-0.6px;line-height:20px;color:#000">    <b class="p">]</b></div>
<div class="t m" style="left:0px;top:448px;width:20px;text-align:right;font-size:16px;letter-spacing:-0.5px;line-height:20px;color:#800000">24</div>
<div class="t m" style="left:26px;top:448px;font-size:16px;letter-spacing:-0.6px;line-height:20px;color:#000"><b class="p">}</b></div>
<div class="t m" style="left:0px;top:468px;width:20px;text-align:right;font-size:16px;letter-spacing:-0.5px;line-height:20px;color:#800000">25</div>
<div class="t m" style="left:26px;top:468px;font-size:16px;letter-spacing:-0.6px;line-height:20px;color:#000"><b class="p">{</b></div>
<div class="t m" style="left:0px;top:488px;width:20px;text-align:right;font-size:16px;letter-spacing:-0.5px;line-height:20px;color:#800000">26</div>
<div class="t m" style="left:26px;top:488px;font-size:16px;letter-spacing:-0.6px;line-height:20px;color:#000">    <span class="k">&quot;_id&quot;</span> <b class="p">:</b> NumberInt<span class="p">(</span><span class="n">1002</span><span class="p">)</span><b class="p">,</b></div>
<div class="t m" style="left:0px;top:508px;width:20px;text-align:right;font-size:16px;letter-spacing:-0.5px;line-height:20px;color:#800000">27</div>
<div class="t m" style="left:26px;top:508px;font-size:16px;letter-spacing:-0.6px;line-height:20px;color:#000">    <span class="k">&quot;status&quot;</span> <b class="p">:</b> <span class="k">&quot;pp2&quot;</span><b class="p">,</b></div>
<div class="t m" style="left:0px;top:528px;width:20px;text-align:right;font-size:16px;letter-spacing:-0.5px;line-height:20px;color:#800000">28</div>
<div class="t m" style="left:26px;top:528px;font-size:16px;letter-spacing:-0.6px;line-height:20px;color:#000">    <span class="k">&quot;orderTime&quot;</span> <b class="p">:</b> ISODate<span class="p">(</span><span class="k">&quot;2020-09-05T16:47:32.462+0000&quot;</span><span class="p">)</span><b class="p">,</b></div>
<div class="t m" style="left:0px;top:548px;width:20px;text-align:right;font-size:16px;letter-spacing:-0.5px;line-height:20px;color:#800000">29</div>
<div class="t m" style="left:26px;top:548px;font-size:16px;letter-spacing:-0.6px;line-height:20px;color:#000">    <span class="k">&quot;shipper&quot;</span> <b class="p">:</b> <span class="k">&quot;<span class="c">豆豆</span>&quot;</span><b class="p">,</b></div>
</div>
<div class="r" style="left:530px;top:386px;width:189px;height:24px;border:3px solid #fd3131"></div>
<div class="r" style="left:567px;top:609px;width:581px;height:184px;border:3px solid #fd3131"></div>
<div class="r" style="left:476px;top:281px;width:1px;height:690px;background:#b4b4b4"></div>
<div class="r" style="left:478px;top:362px;width:1px;height:607px;background:#a0a0a0"></div>
<svg class="r" style="left:506px;top:919px;" width="10" height="12" viewBox="0 0 10 12"><path d="M7.5 1.5 L3 6 L7.5 10.5" fill="none" stroke="#b0b0b0" stroke-width="1.4"/></svg>
<div class="r" style="left:478px;top:937px;width:839px;height:1px;background:#a0a0a0"></div>
<div class="r" style="left:479px;top:938px;width:838px;height:1px;background:#fafafa"></div>
<div class="r" style="left:478px;top:968px;width:839px;height:1px;background:#a0a0a0"></div>
<div class="r" style="left:476px;top:970px;width:841px;height:1px;background:#a9a9a9"></div>
<div class="t s" style="left:523.30px;top:943.28px;font-size:16.5px;line-height:20px;color:#000;">1 document selected</div>
</body></html>
